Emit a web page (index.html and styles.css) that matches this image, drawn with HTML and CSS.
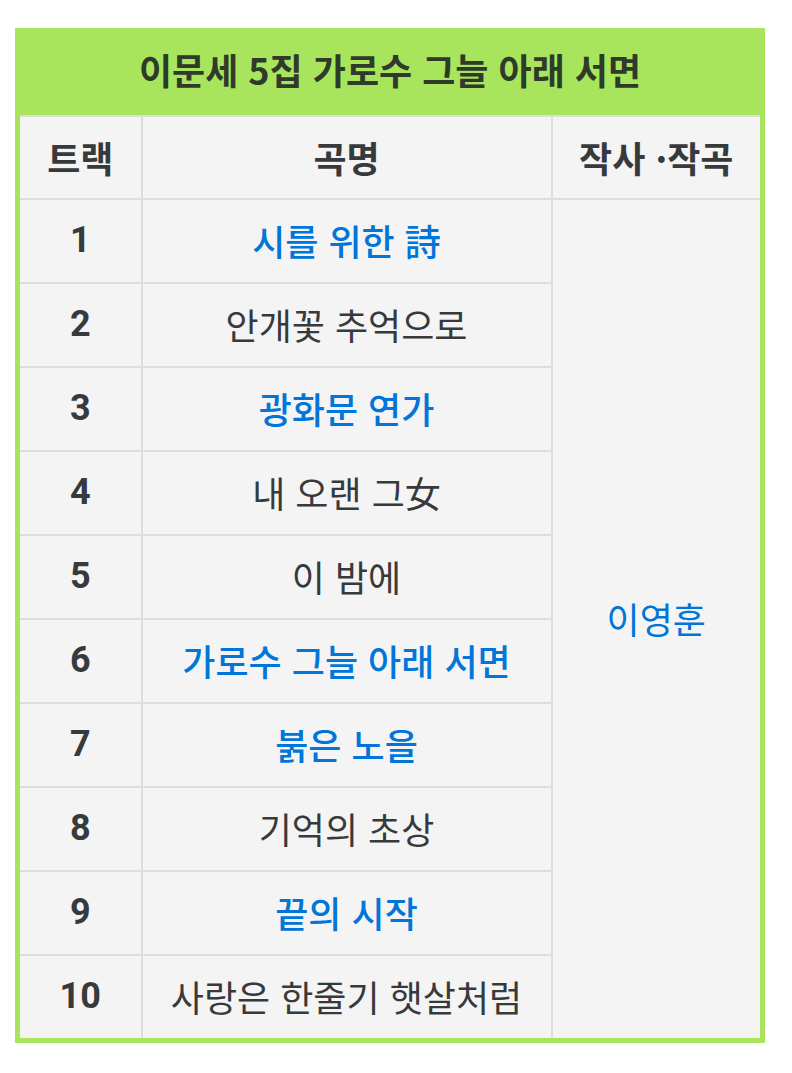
FILE: index.html
```html
<!DOCTYPE html>
<html lang="ko">
<head>
<meta charset="utf-8">
<link rel="stylesheet" href="styles.css">
</head>
<body>
<div class="wrap">
<table class="album">
  <colgroup>
    <col class="c-no">
    <col class="c-title">
    <col class="c-credit">
  </colgroup>
  <tr class="title-row"><td colspan="3" class="album-title">이문세 5집 가로수 그늘 아래 서면</td></tr>
  <tr class="head-row"><td class="th">트랙</td><td class="th">곡명</td><td class="th">작사 ·작곡</td></tr>
  <tr><td class="no">1</td><td class="song link">시를 위한 詩</td><td class="credit link" rowspan="10">이영훈</td></tr>
  <tr><td class="no">2</td><td class="song">안개꽃 추억으로</td></tr>
  <tr><td class="no">3</td><td class="song link">광화문 연가</td></tr>
  <tr><td class="no">4</td><td class="song">내 오랜 그女</td></tr>
  <tr><td class="no">5</td><td class="song">이 밤에</td></tr>
  <tr><td class="no">6</td><td class="song link">가로수 그늘 아래 서면</td></tr>
  <tr><td class="no">7</td><td class="song link">붉은 노을</td></tr>
  <tr><td class="no">8</td><td class="song">기억의 초상</td></tr>
  <tr><td class="no">9</td><td class="song link">끝의 시작</td></tr>
  <tr><td class="no">10</td><td class="song">사랑은 한줄기 햇살처럼</td></tr>
</table>
</div>
</body>
</html>
```
FILE: styles.css
```css
html, body {
  margin: 0;
  padding: 0;
  background: #ffffff;
}
.wrap {
  padding: 28px 0 0 15px;
}
.album {
  width: 750px;
  border-collapse: collapse;
  table-layout: fixed;
  border: 5px solid #a8e55c;
  border-top: none;
  font-family: "Noto Sans CJK KR", "Noto Sans", sans-serif;
  font-size: 36px;
  line-height: 1.2;
  color: #373a3c;
}
.c-no { width: 124px; }
.c-title { width: 410px; }
.album td {
  border: 2px solid #dddddd;
  background: #f4f4f4;
  text-align: center;
  vertical-align: middle;
  height: 82px;
  padding: 0;
}
.album td.album-title {
  background: #a8e55c;
  border: none;
  height: 84px;
  padding-bottom: 3px;
  font-weight: bold;
  color: #2f3a2a;
}
.album td.th {
  font-weight: bold;
  height: 81px;
}
.album td.no {
  font-weight: bold;
  font-family: Roboto, "Noto Sans CJK KR", sans-serif;
}
.album td.link {
  color: #0275d8;
}
.album td.song.link {
  font-weight: 500;
}
```
